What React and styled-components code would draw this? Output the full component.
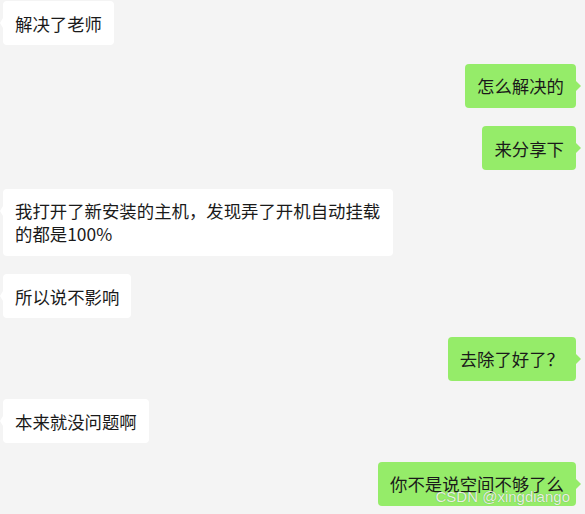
import styled, { createGlobalStyle } from "styled-components";

const GlobalStyle = createGlobalStyle`
  html, body {
    margin: 0;
    padding: 0;
    background: #f4f4f4;
  }
  body {
    font-family: "Noto Sans CJK SC", "Noto Sans", sans-serif;
  }
`;

const Chat = styled.div`
  position: relative;
  width: 585px;
  height: 514px;
  overflow: hidden;
  box-sizing: border-box;
  padding: 1px 9px 0 3px;
  display: flex;
  flex-direction: column;
  gap: 18.5px;
`;

const Row = styled.div`
  display: flex;
  justify-content: ${(p) => (p.$mine ? "flex-end" : "flex-start")};
`;

const Bubble = styled.div`
  position: relative;
  box-sizing: border-box;
  max-width: 390px;
  padding: 10.5px 12px;
  border-radius: 4px;
  background: ${(p) => (p.$mine ? "#95ec69" : "#ffffff")};
  color: #1a1a1a;
  font-size: 17.4px;
  line-height: 23px;
  word-break: break-all;

  &::before {
    content: "";
    position: absolute;
    top: 17px;
    ${(p) => (p.$mine ? "right: -5px;" : "left: -3px;")}
    border-top: 5px solid transparent;
    border-bottom: 5px solid transparent;
    ${(p) =>
      p.$mine
        ? "border-left: 5px solid #95ec69;"
        : "border-right: 3px solid #ffffff;"}
  }
`;

const Watermark = styled.div`
  position: absolute;
  right: 15px;
  bottom: 9px;
  font-family: "Liberation Sans", Arial, sans-serif;
  font-size: 15px;
  color: rgba(255, 255, 255, 0.85);
  text-shadow: 0 0 1px rgba(0, 0, 0, 0.35);
  pointer-events: none;
`;

const messages = [
  { mine: false, text: "解决了老师" },
  { mine: true, text: "怎么解决的" },
  { mine: true, text: "来分享下" },
  { mine: false, text: "我打开了新安装的主机，发现弄了开机自动挂载的都是100%" },
  { mine: false, text: "所以说不影响" },
  { mine: true, text: "去除了好了？" },
  { mine: false, text: "本来就没问题啊" },
  { mine: true, text: "你不是说空间不够了么" },
];

export default function App() {
  return (
    <>
      <GlobalStyle />
      <Chat>
        {messages.map((m, i) => (
          <Row key={i} $mine={m.mine}>
            <Bubble $mine={m.mine}>{m.text}</Bubble>
          </Row>
        ))}
        <Watermark>CSDN @xingdiango</Watermark>
      </Chat>
    </>
  );
}
